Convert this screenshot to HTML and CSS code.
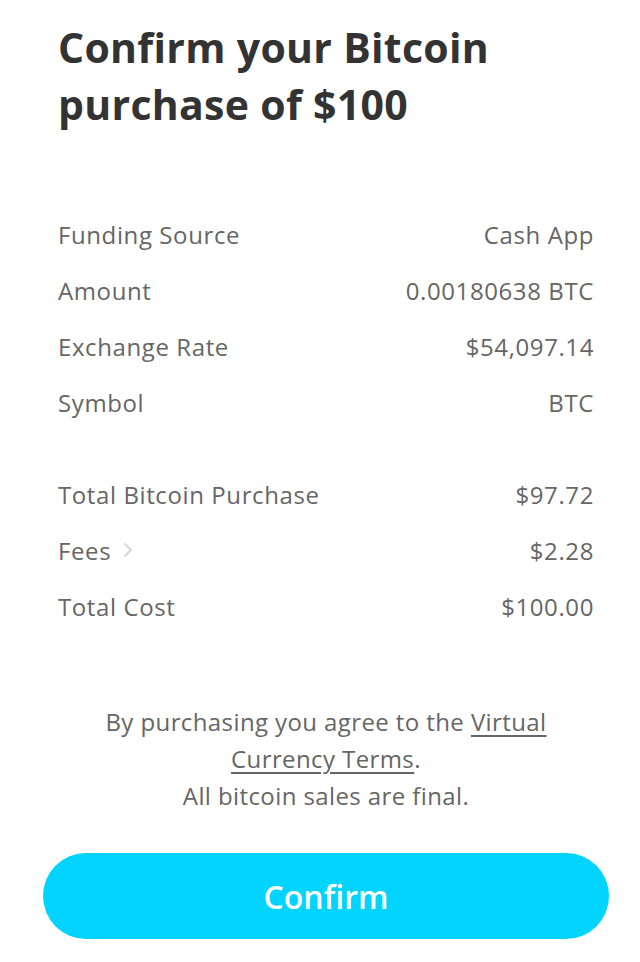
FILE: index.html
```html
<!DOCTYPE html>
<html lang="en">
<head>
    <meta charset="UTF-8">
    <meta name="viewport" content="width=device-width, initial-scale=1.0">
    <title>Confirm Purchase</title>
    <link rel="stylesheet" href="styles.css">
</head>
<body>
    <div class="page">
        <h1 class="title">Confirm your Bitcoin purchase of $100</h1>

        <div class="details">
            <div class="row"><span>Funding Source</span><span>Cash App</span></div>
            <div class="row"><span>Amount</span><span>0.00180638 BTC</span></div>
            <div class="row"><span>Exchange Rate</span><span>$54,097.14</span></div>
            <div class="row"><span>Symbol</span><span>BTC</span></div>
        </div>

        <div class="details">
            <div class="row"><span>Total Bitcoin Purchase</span><span>$97.72</span></div>
            <div class="row">
                <span class="fees">Fees
                    <svg class="chevron" width="10" height="16" viewBox="0 0 10 16">
                        <path d="M2 2 L8 8 L2 14" fill="none" stroke="#d6d6d6" stroke-width="2" stroke-linecap="round" stroke-linejoin="round"/>
                    </svg>
                </span>
                <span>$2.28</span>
            </div>
            <div class="row"><span>Total Cost</span><span>$100.00</span></div>
        </div>

        <p class="disclaimer">By purchasing you agree to the <a href="#">Virtual<br>Currency Terms</a>.<br>All bitcoin sales are final.</p>

        <button class="confirm-button" type="button">Confirm</button>
    </div>
</body>
</html>
```

FILE: styles.css
```css
body {
    margin: 0;
    background-color: #ffffff;
    font-family: "Open Sans", Arial, sans-serif;
}

.page {
    padding: 0 31px 0 43px;
}

.title {
    margin: 0;
    padding: 19px 15px 0 15px;
    font-size: 41px;
    line-height: 57px;
    font-weight: 700;
    letter-spacing: 0.3px;
    color: #333333;
    max-width: 460px;
}

.details {
    padding: 0 15px;
    margin-top: 73px;
}

.details + .details {
    margin-top: 36px;
}

.row {
    display: flex;
    justify-content: space-between;
    align-items: center;
    height: 56px;
    font-size: 24px;
    letter-spacing: 0.6px;
    color: #666666;
}

.fees {
    display: flex;
    align-items: center;
    gap: 12px;
}

.disclaimer {
    margin: 69px 0 0 0;
    text-align: center;
    font-size: 24px;
    line-height: 37px;
    letter-spacing: 0.4px;
    color: #666666;
}

.disclaimer a {
    color: #666666;
    text-decoration: underline;
    text-underline-offset: 4px;
}

.confirm-button {
    display: block;
    width: 100%;
    height: 86px;
    margin-top: 39px;
    border: none;
    border-radius: 43px;
    background-color: #00d4ff;
    color: #ffffff;
    font-family: "Open Sans", Arial, sans-serif;
    font-size: 32px;
    font-weight: 600;
    cursor: pointer;
}
```
